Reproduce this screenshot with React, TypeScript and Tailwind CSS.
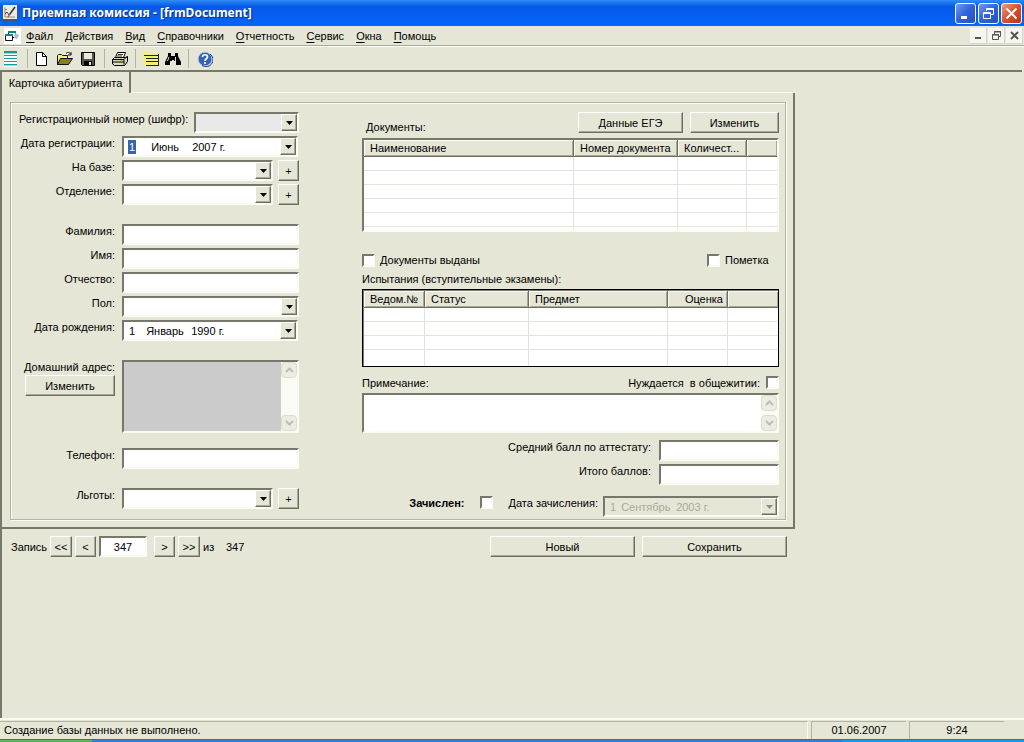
import React from "react";

const sunken =
  "border-2 border-t-[#77776b] border-l-[#77776b] border-b-[#fbfbf3] border-r-[#fbfbf3] bg-white";
const raised =
  "border border-t-white border-l-white border-b-[#6d6d62] border-r-[#6d6d62] shadow-[inset_-1px_-1px_0_#a9a998] bg-[#e6e6d6]";

function Arrow({ dim = false }: { dim?: boolean }) {
  return (
    <span
      className={`pointer-events-none flex w-4 items-center justify-center justify-self-end [grid-area:1/1] ${raised}`}
    >
      <svg width="7" height="4" viewBox="0 0 7 4" aria-hidden="true">
        <path d="M0 0h7L3.5 4z" fill={dim ? "#8d8d80" : "#000"} />
      </svg>
    </span>
  );
}

function Combo({ id, gray = false, children }: { id: string; gray?: boolean; children?: React.ReactNode }) {
  return (
    <div className={`grid h-[21px] min-w-0 flex-1 ${sunken}`}>
      <select
        id={id}
        className={`min-w-0 appearance-none px-1 outline-none [grid-area:1/1] ${gray ? "bg-[#e9e9e9]" : "bg-white"}`}
      >
        {children}
      </select>
      <Arrow />
    </div>
  );
}

type DateProps = { id: string; day: string; month: string; year: string; active?: boolean; disabled?: boolean };

function DatePicker({ id, day, month, year, active, disabled }: DateProps) {
  return (
    <button
      id={id}
      type="button"
      disabled={disabled}
      aria-haspopup="dialog"
      className={`grid h-[21px] w-44 shrink-0 text-left ${
        disabled
          ? "border-2 border-t-[#77776b] border-l-[#77776b] border-b-[#fbfbf3] border-r-[#fbfbf3] bg-[#e6e6d6] text-[#a9a998]"
          : sunken
      }`}
    >
      <span className="flex items-center pl-1 [grid-area:1/1]">
        <span className={active ? "bg-[#3a63a8] px-px text-white" : "px-px"}>{day}</span>
        <span className={active ? "w-[42px] pl-[15px]" : disabled ? "w-[55px] pl-1" : "w-[46px] pl-[10px]"}>
          {month}
        </span>
        <span className={active ? "pl-[14px]" : disabled ? "pl-1" : "pl-[9px]"}>{year}</span>
      </span>
      <Arrow dim={disabled} />
    </button>
  );
}

function Row({ id, label, children }: { id: string; label: string; children: React.ReactNode }) {
  return (
    <div className="flex gap-[7px]">
      <label htmlFor={id} className="w-24 shrink-0 whitespace-nowrap text-right">
        {label}
      </label>
      {children}
    </div>
  );
}

function Btn({ children, className = "" }: { children: React.ReactNode; className?: string }) {
  return (
    <button type="button" className={`h-[21px] ${raised} ${className}`}>
      {children}
    </button>
  );
}

function Check({ id }: { id: string }) {
  return <input id={id} type="checkbox" className={`size-[13px] shrink-0 appearance-none ${sunken}`} />;
}

function TextField({ id }: { id: string }) {
  return <input id={id} type="text" className={`h-[21px] min-w-0 flex-1 px-1 outline-none ${sunken}`} />;
}

function ScrollBar() {
  const cell = "flex h-4 items-center justify-center rounded-sm border border-[#dcdccf] bg-[#ecece2]";
  return (
    <div className="flex w-4 shrink-0 flex-col justify-between bg-[#fbfbf5]">
      <button type="button" disabled aria-label="Вверх" className={cell}>
        <svg width="9" height="6" viewBox="0 0 9 6" fill="none" stroke="#bdbdb2" strokeWidth="2">
          <path d="M1 5l3.500-3.500L8 5" />
        </svg>
      </button>
      <button type="button" disabled aria-label="Вниз" className={cell}>
        <svg width="9" height="6" viewBox="0 0 9 6" fill="none" stroke="#bdbdb2" strokeWidth="2">
          <path d="M1 1l3.500 3.500L8 1" />
        </svg>
      </button>
    </div>
  );
}

type Column = { title: string; width?: number; right?: boolean };

function ListTable({ columns, rows, label }: { columns: Column[]; rows: number[]; label: string }) {
  return (
    <table aria-label={label} className="w-full table-fixed border-separate border-spacing-0 bg-white">
      <colgroup>
        {columns.map((c, i) => (
          <col key={i} style={c.width ? { width: c.width } : undefined} />
        ))}
      </colgroup>
      <thead>
        <tr className="h-[17px]">
          {columns.map((c, i) => (
            <th
              key={i}
              className={`border-r border-b border-[#6d6d62] bg-[#e6e6d6] p-0 pl-[6px] font-normal whitespace-nowrap shadow-[inset_1px_1px_0_#fbfbf3,inset_-1px_-1px_0_#a9a998] last:border-r-0 ${
                c.right ? "pr-1 text-right" : "text-left"
              }`}
            >
              {c.title}
            </th>
          ))}
        </tr>
      </thead>
      <tbody>
        {rows.map((h, i) => (
          <tr key={i} style={{ height: h }}>
            {columns.map((_, j) => (
              <td key={j} className="border-r border-b border-[#e3e3dc] p-0 last:border-r-0" />
            ))}
          </tr>
        ))}
      </tbody>
    </table>
  );
}

const menu = ["Файл", "Действия", "Вид", "Справочники", "Отчетность", "Сервис", "Окна", "Помощь"];

const px = { shapeRendering: "crispEdges" as const };

function AppIcon() {
  return (
    <svg width="16" height="16" viewBox="0 0 16 16" aria-hidden="true">
      <path d="M1 0h14v14H1z" fill="#ecebe6" />
      <path d="M0 1h1v14h14v1H0zM15 1h1v15h-1z" fill="#4b5368" />
      <path d="M3 2.500v9.500M3 4.500h2M3 7.500h2M3 12h10" stroke="#8d8d8d" fill="none" />
      <path d="M13 2L7.500 9.500" stroke="#333" fill="none" strokeWidth="1.500" />
      <path d="M7.500 9.500L6 12" stroke="#c4566a" strokeWidth="1.500" />
      <path d="M3 9l2-2 2 3" stroke="#555" fill="none" />
    </svg>
  );
}

function FormIcon() {
  return (
    <svg width="17" height="16" viewBox="0 0 17 16" aria-hidden="true">
      <path d="M0 0h17v16H0z" fill="#fff" />
      <path d="M4.500 3.500h7v6h-7z" fill="#fff" stroke="#111" />
      <path d="M4 3h8v2H4z" fill="#147f88" />
      <path d="M1.500 6.500h7v6h-7z" fill="#fff" stroke="#111" />
      <path d="M1 6h8v2H1z" fill="#147f88" />
      <path d="M11 5l4 2-2 4-3-1z" fill="#aebdce" />
    </svg>
  );
}

const tools: { name: string; gap: string; icon: React.ReactNode }[] = [
  {
    name: "Список",
    gap: "w-[25px] border-r",
    icon: (
      <svg width="15" height="16" viewBox="0 0 15 16" style={px}>
        <path d="M1 0h13v16H1z" fill="#fff" />
        <path d="M1 0h13v2H1zM1 4h13v1H1zM1 7h13v1H1zM1 10h13v1H1zM1 13h13v1H1z" fill="#159b9f" />
        <path d="M1 2h13v1H1zM1 14h13v1H1z" fill="#8fdadb" />
      </svg>
    ),
  },
  {
    name: "Создать",
    gap: "ml-[6px] w-4",
    icon: (
      <svg width="16" height="16" viewBox="0 0 16 16">
        <path d="M2.500 1.500h6l4 4v9h-10z" fill="#fff" stroke="#000" />
        <path d="M8.500 1.500v4h4" fill="none" stroke="#000" />
      </svg>
    ),
  },
  {
    name: "Открыть",
    gap: "ml-[7px] w-4",
    icon: (
      <svg width="16" height="16" viewBox="0 0 16 16">
        <path d="M.5 13.500v-9l1-1h3l1 1h5v3" fill="#f3ef7c" stroke="#111" />
        <path d="M.5 13.500l3-6h12l-4 6z" fill="#85821d" stroke="#111" />
        <path d="M9 2.500c2-2 4-1 5 1.500m0-3v3h-3" fill="none" stroke="#111" />
      </svg>
    ),
  },
  {
    name: "Сохранить запись",
    gap: "ml-[7px] w-4",
    icon: (
      <svg width="16" height="16" viewBox="0 0 16 16">
        <path d="M1.500 1.500h13v13h-12l-1-1z" fill="#55554a" stroke="#000" />
        <path d="M4 2h8v6H4z" fill="#e9e9dc" />
        <path d="M4 10h8v5H4z" fill="#000" />
        <path d="M9 11h2v3H9z" fill="#e9e9dc" />
      </svg>
    ),
  },
  {
    name: "Печать",
    gap: "ml-2 w-[31px] border-l pl-[6px]",
    icon: (
      <svg width="17" height="16" viewBox="0 0 17 16">
        <path d="M4.500 6.500l2-5h8l-2 5z" fill="#fff" stroke="#000" />
        <path d="M7 3.500h5M6 5h5" stroke="#000" strokeWidth=".8" />
        <path d="M1.500 8.500l2-2h11l2-1v5l-3 4h-10l-2-1.500z" fill="#d8d8c8" stroke="#000" />
        <path d="M1.500 8.500h11.500v5M13 8.500l3-3M2 11h11" fill="none" stroke="#000" />
        <path d="M9 9.500h2" stroke="#d6cf2a" />
      </svg>
    ),
  },
  {
    name: "Карточка",
    gap: "w-6 border-l pl-[6px]",
    icon: (
      <svg width="17" height="16" viewBox="0 0 17 16" style={px}>
        <path d="M1 1h7v2h8v12H3v-3H1z" fill="#f4ef79" />
        <path d="M2 4h14v1H2zM4 7h12v1H4zM4 10h12v1H4zM4 14h13v1H4zM16 3h1v12h-1z" fill="#222" />
      </svg>
    ),
  },
  {
    name: "Найти",
    gap: "ml-[6px] w-4",
    icon: (
      <svg width="16" height="16" viewBox="0 0 16 16">
        <path d="M3 2h3v3h4V2h3v3l3 6v3h-5v-4H9v-1H7v1H5v4H0v-3l3-6z" fill="#000" />
        <path d="M2.500 10l1.500-4M10.500 10V6" stroke="#ddd" />
      </svg>
    ),
  },
  {
    name: "Справка",
    gap: "ml-[7px] border-l pl-2",
    icon: (
      <svg width="16" height="16" viewBox="0 0 16 16">
        <circle cx="8" cy="8" r="7" fill="#3563ba" stroke="#c9d6ea" />
        <path d="M13 3a7 7 0 0 1-8 11.500" fill="none" stroke="#1b3b83" />
        <path d="M5.500 6C5.500 3 10.500 3 10.500 6 10.500 8 8 7.500 8 10" fill="none" stroke="#fff" strokeWidth="1.700" />
        <circle cx="8" cy="12" r="1.100" fill="#fff" />
      </svg>
    ),
  },
];

function CaptionButton({ label, red, children }: { label: string; red?: boolean; children: React.ReactNode }) {
  return (
    <button
      type="button"
      aria-label={label}
      className={`flex size-[21px] items-center justify-center rounded-[3px] border border-white ${
        red
          ? "bg-linear-to-br from-[#ec9a80] via-[#d9502c] to-[#b83512]"
          : "bg-linear-to-br from-[#6f9bf0] via-[#2f62dc] to-[#2450c4]"
      }`}
    >
      <svg width="15" height="15" viewBox="0 0 15 15" fill="none" stroke="#fff">
        {children}
      </svg>
    </button>
  );
}

function ChildButton({ label, children }: { label: string; children: React.ReactNode }) {
  return (
    <button
      type="button"
      aria-label={label}
      className="flex h-4 w-[17px] items-center justify-center border-r border-b border-[#d5d5c8] bg-[#f6f6f1]"
    >
      <svg width="11" height="11" viewBox="0 0 11 11" fill="none" stroke="#555550">
        {children}
      </svg>
    </button>
  );
}

export default function App() {
  return (
    <div className="flex min-h-screen flex-col bg-[#e6e6d6] font-['Liberation_Sans',Arial,sans-serif] text-[11px] leading-[14px] text-black">
      <header className="flex h-[26px] items-center bg-linear-to-b from-[#2f8cf8] via-[#0659e8] via-25% to-[#0566fb] pr-[2px] pl-[2px]">
        <AppIcon />
        <h1 className="ml-1 flex-1 font-['Noto_Sans',sans-serif] text-[12px] leading-5 font-bold whitespace-nowrap text-white [text-shadow:1px_1px_1px_#0a2a80]">
          Приемная комиссия - [frmDocument]
        </h1>
        <div className="flex gap-[2px]">
          <CaptionButton label="Свернуть">
            <path d="M3 11.500h6" strokeWidth="3" />
          </CaptionButton>
          <CaptionButton label="Восстановить">
            <path d="M5.500 5V2.500h7v6H10M2.500 6.500h7v6h-7zM5 3.500h8M2 7.500h8" />
          </CaptionButton>
          <CaptionButton label="Закрыть" red>
            <path d="M2.500 2.500l10 10M12.500 2.500l-10 10" strokeWidth="2" />
          </CaptionButton>
        </div>
      </header>

      <nav className="flex h-5 items-center border-b border-[#a9a998] pr-px pl-1">
        <FormIcon />
        <div className="flex flex-1 gap-3 pl-[5px]">
          {menu.map((m) => (
            <button key={m} type="button" className="whitespace-nowrap">
              <span className="underline underline-offset-2">{m[0]}</span>
              {m.slice(1)}
            </button>
          ))}
        </div>
        <div className="flex gap-px">
          <ChildButton label="Свернуть окно">
            <path d="M2 8h6" strokeWidth="2" />
          </ChildButton>
          <ChildButton label="Восстановить окно">
            <path d="M3.500 4V1.500h6v5H8M1.500 4.500h6v5h-6zM3 2h7M1 5h7" />
          </ChildButton>
          <ChildButton label="Закрыть окно">
            <path d="M2 2l7 7M9 2L2 9" strokeWidth="2" />
          </ChildButton>
        </div>
      </nav>

      <div className="flex h-6 items-center border-t border-white pl-[3px]" role="toolbar" aria-label="Инструменты">
        {tools.map((t) => (
          <div key={t.name} className={`flex h-[19px] items-center border-[#b3b3a4] ${t.gap}`}>
            <button type="button" aria-label={t.name}>
              {t.icon}
            </button>
          </div>
        ))}
      </div>

      <main className="mr-[2px] flex-1 border-t-2 border-l-2 border-[#77776b]">
        <form className="w-full max-w-[793px]" onSubmit={(e) => e.preventDefault()}>
          <div className="flex">
            <div role="tablist" className="flex">
              <button
                type="button"
                role="tab"
                aria-selected="true"
                className="h-[21px] w-[129px] border-r-2 border-[#77776b] text-center whitespace-nowrap"
              >
                Карточка абитуриента
              </button>
            </div>
            <div className="flex-1 border-b border-[#fbfbf3]" />
          </div>

          <div className="border-r-2 border-b-2 border-[#77776b] pt-[9px] pr-[7px] pb-[7px] pl-2">
            <div className="flex justify-between border border-[#b3b3a4] pt-[9px] pr-[6px] pb-[2px] pl-2 shadow-[inset_1px_1px_0_#fbfbf3,1px_1px_0_#fbfbf3]">
              <div className="flex w-[280px] shrink-0 flex-col gap-[3px]">
                <div className="flex gap-[7px]">
                  <label htmlFor="reg" className="w-[168px] shrink-0 text-right whitespace-nowrap">
                    Регистрационный номер (шифр):
                  </label>
                  <Combo id="reg" gray />
                </div>
                <Row id="regdate" label="Дата регистрации:">
                  <DatePicker id="regdate" day="1" month="Июнь" year="2007 г." active />
                </Row>
                <Row id="base" label="На базе:">
                  <div className="flex flex-1 gap-[5px]">
                    <Combo id="base" />
                    <Btn className="w-[21px]">+</Btn>
                  </div>
                </Row>
                <Row id="dept" label="Отделение:">
                  <div className="flex flex-1 gap-[5px]">
                    <Combo id="dept" />
                    <Btn className="w-[21px]">+</Btn>
                  </div>
                </Row>
                <div className="mt-4 flex flex-col gap-[3px]">
                  <Row id="surname" label="Фамилия:">
                    <TextField id="surname" />
                  </Row>
                  <Row id="name" label="Имя:">
                    <TextField id="name" />
                  </Row>
                  <Row id="patronymic" label="Отчество:">
                    <TextField id="patronymic" />
                  </Row>
                  <Row id="sex" label="Пол:">
                    <Combo id="sex" />
                  </Row>
                  <Row id="birth" label="Дата рождения:">
                    <DatePicker id="birth" day="1" month="Январь" year="1990 г." />
                  </Row>
                </div>
                <div className="mt-4 flex gap-[7px]">
                  <div className="w-24 shrink-0 text-right">
                    <label htmlFor="address" className="block whitespace-nowrap">
                      Домашний адрес:
                    </label>
                    <Btn className="mt-px w-[90px]">Изменить</Btn>
                  </div>
                  <div className={`flex h-[73px] min-w-0 flex-1 ${sunken}`}>
                    <textarea id="address" readOnly className="min-w-0 flex-1 resize-none bg-[#cbcbcb] outline-none" />
                    <ScrollBar />
                  </div>
                </div>
                <div className="mt-3">
                  <Row id="phone" label="Телефон:">
                    <TextField id="phone" />
                  </Row>
                </div>
                <div className="mt-4">
                  <Row id="benefit" label="Льготы:">
                    <div className="flex flex-1 gap-[5px]">
                      <Combo id="benefit" />
                      <Btn className="w-[21px]">+</Btn>
                    </div>
                  </Row>
                </div>
              </div>

              <div className="ml-8 flex max-w-[417px] min-w-0 flex-1 flex-col">
                <div className="flex h-[26px] gap-[7px]">
                  <h2 className="flex-1 pt-2 pl-1">Документы:</h2>
                  <Btn className="w-[105px]">Данные ЕГЭ</Btn>
                  <Btn className="w-[89px]">Изменить</Btn>
                </div>
                <div className={`h-[94px] overflow-hidden ${sunken}`}>
                  <ListTable
                    label="Документы"
                    columns={[
                      { title: "Наименование", width: 210 },
                      { title: "Номер документа", width: 104 },
                      { title: "Количест...", width: 69 },
                      { title: "" },
                    ]}
                    rows={[14, 14, 14, 14, 14, 14]}
                  />
                </div>
                <div className="mt-[21px] flex h-[14px] items-center gap-[5px]">
                  <Check id="issued" />
                  <label htmlFor="issued">Документы выданы</label>
                  <span className="flex-1" />
                  <Check id="mark" />
                  <label htmlFor="mark" className="w-[54px]">
                    Пометка
                  </label>
                </div>
                <h2 className="mt-[5px]">Испытания (вступительные экзамены):</h2>
                <div className="mt-[3px] border border-black">
                  <div className="h-[76px] overflow-hidden border-t border-l border-[#77776b]">
                    <ListTable
                      label="Испытания"
                      columns={[
                        { title: "Ведом.№", width: 61 },
                        { title: "Статус", width: 104 },
                        { title: "Предмет", width: 139 },
                        { title: "Оценка", width: 60, right: true },
                        { title: "" },
                      ]}
                      rows={[14, 14, 14, 18]}
                    />
                  </div>
                </div>
                <div className="mt-[9px] flex h-[17px] justify-between">
                  <label htmlFor="note">Примечание:</label>
                  <div className="flex gap-[6px]">
                    <label htmlFor="dorm" className="whitespace-pre">
                      {"Нуждается  в общежитии:"}
                    </label>
                    <Check id="dorm" />
                  </div>
                </div>
                <div className={`flex h-10 ${sunken}`}>
                  <textarea id="note" className="min-w-0 flex-1 resize-none px-1 outline-none" />
                  <ScrollBar />
                </div>
                <div className="mt-[7px] flex flex-col gap-[3px]">
                  <div className="flex justify-end gap-2">
                    <label htmlFor="avg">Средний балл по аттестату:</label>
                    <div className="flex w-[120px]">
                      <TextField id="avg" />
                    </div>
                  </div>
                  <div className="flex justify-end gap-2">
                    <label htmlFor="total">Итого баллов:</label>
                    <div className="flex w-[120px]">
                      <TextField id="total" />
                    </div>
                  </div>
                </div>
                <div className="mt-[11px] flex justify-end">
                  <label htmlFor="enrolled" className="mr-[15px] font-bold">
                    Зачислен:
                  </label>
                  <Check id="enrolled" />
                  <label htmlFor="enrolldate" className="mr-[5px] ml-4 whitespace-nowrap">
                    Дата зачисления:
                  </label>
                  <DatePicker id="enrolldate" day="1" month="Сентябрь" year="2003 г." disabled />
                </div>
              </div>
            </div>
          </div>

          <div className="flex items-center gap-[3px] pt-[7px] pr-2 pl-[9px]">
            <label htmlFor="record" className="w-9">
              Запись
            </label>
            <Btn className="w-[22px]">&lt;&lt;</Btn>
            <Btn className="w-[21px]">&lt;</Btn>
            <input
              id="record"
              type="text"
              defaultValue="347"
              className={`h-[21px] w-12 text-center outline-none ${sunken}`}
            />
            <Btn className="ml-1 w-[21px]">&gt;</Btn>
            <Btn className="w-[22px]">&gt;&gt;</Btn>
            <span className="w-5">из</span>
            <span className="flex-1">347</span>
            <Btn className="mr-1 w-[145px]">Новый</Btn>
            <Btn className="w-[145px]">Сохранить</Btn>
          </div>
        </form>
      </main>

      <footer>
        <div className="flex h-[21px] gap-[3px] border-t-2 border-[#fbfbf3] pt-px">
          <div className="flex-1 border-t border-r border-t-[#b3b3a4] border-r-[#fbfbf3] pt-px pl-1">
            Создание базы данных не выполнено.
          </div>
          <div className="w-[95px] border-t border-l border-[#b3b3a4] pt-px text-center">01.06.2007</div>
          <div className="mr-5 w-[95px] border-t border-l border-[#b3b3a4] pt-px text-center">9:24</div>
        </div>
        <div className="flex h-[3px] border-t border-[#2b6fb5]">
          <div className="w-[92px] bg-[#57b558]" />
          <div className="flex-1 bg-[#2f7fe0]" />
          <div className="w-[182px] bg-[#169bee]" />
        </div>
      </footer>
    </div>
  );
}
